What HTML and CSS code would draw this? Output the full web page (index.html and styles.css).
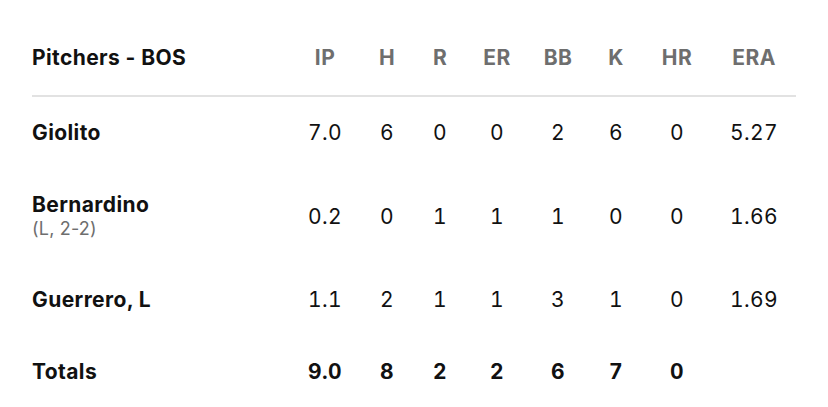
FILE: index.html
```html
<!DOCTYPE html>
<html lang="en">
<head>
<meta charset="UTF-8">
<meta name="viewport" content="width=device-width, initial-scale=1.0">
<title>Box score - Pitchers BOS</title>
<link rel="stylesheet" href="styles.css">
</head>
<body>

<div class="boxscore">
    <table class="stats">
        <colgroup>
            <col class="c-name">
            <col class="c-ip">
            <col class="c-h">
            <col class="c-r">
            <col class="c-er">
            <col class="c-bb">
            <col class="c-k">
            <col class="c-hr">
            <col class="c-era">
        </colgroup>
        <thead>
            <tr>
                <th class="name">Pitchers - BOS</th>
                <th>IP</th>
                <th>H</th>
                <th>R</th>
                <th>ER</th>
                <th>BB</th>
                <th>K</th>
                <th>HR</th>
                <th>ERA</th>
            </tr>
        </thead>
        <tbody>
            <tr>
                <td class="name">Giolito</td>
                <td>7.0</td><td>6</td><td>0</td><td>0</td><td>2</td><td>6</td><td>0</td><td>5.27</td>
            </tr>
            <tr>
                <td class="name">Bernardino<span class="note">(L, 2-2)</span></td>
                <td>0.2</td><td>0</td><td>1</td><td>1</td><td>1</td><td>0</td><td>0</td><td>1.66</td>
            </tr>
            <tr>
                <td class="name">Guerrero, L</td>
                <td>1.1</td><td>2</td><td>1</td><td>1</td><td>3</td><td>1</td><td>0</td><td>1.69</td>
            </tr>
            <tr class="totals">
                <td class="name">Totals</td>
                <td>9.0</td><td>8</td><td>2</td><td>2</td><td>6</td><td>7</td><td>0</td><td></td>
            </tr>
        </tbody>
    </table>
</div>

</body>
</html>
```

FILE: styles.css
```css
body {
    margin: 0;
    background: #fff;
    color: #111;
    font-family: "Inter", "Liberation Sans", sans-serif;
}

.boxscore {
    padding: 22px 32px 0;
}

.stats {
    width: 764px;
    border-collapse: collapse;
    table-layout: fixed;
    font-size: 21px;
    line-height: 24px;
    letter-spacing: 0.4px;
}

.c-name { width: 256px; }
.c-ip   { width: 74px; }
.c-h    { width: 50px; }
.c-r    { width: 56px; }
.c-er   { width: 58px; }
.c-bb   { width: 64px; }
.c-k    { width: 52px; }
.c-hr   { width: 70px; }
.c-era  { width: 84px; }

.stats th,
.stats td {
    padding: 24px 0;
    text-align: center;
    vertical-align: middle;
    white-space: nowrap;
}

.stats td {
    font-variant-numeric: tabular-nums;
}

.stats th {
    padding-bottom: 25px;
    border-bottom: 2px solid #e2e2e2;
    color: #6e6e6e;
    font-weight: 700;
}

.stats .name {
    text-align: left;
    color: #111;
    font-weight: 700;
    font-variant-numeric: normal;
}

/* decision under the pitcher name */
.note {
    display: block;
    font-size: 18px;
    line-height: 23px;
    font-weight: 400;
    letter-spacing: 0.2px;
    color: #6e6e6e;
}

.totals td {
    font-weight: 700;
}
```
